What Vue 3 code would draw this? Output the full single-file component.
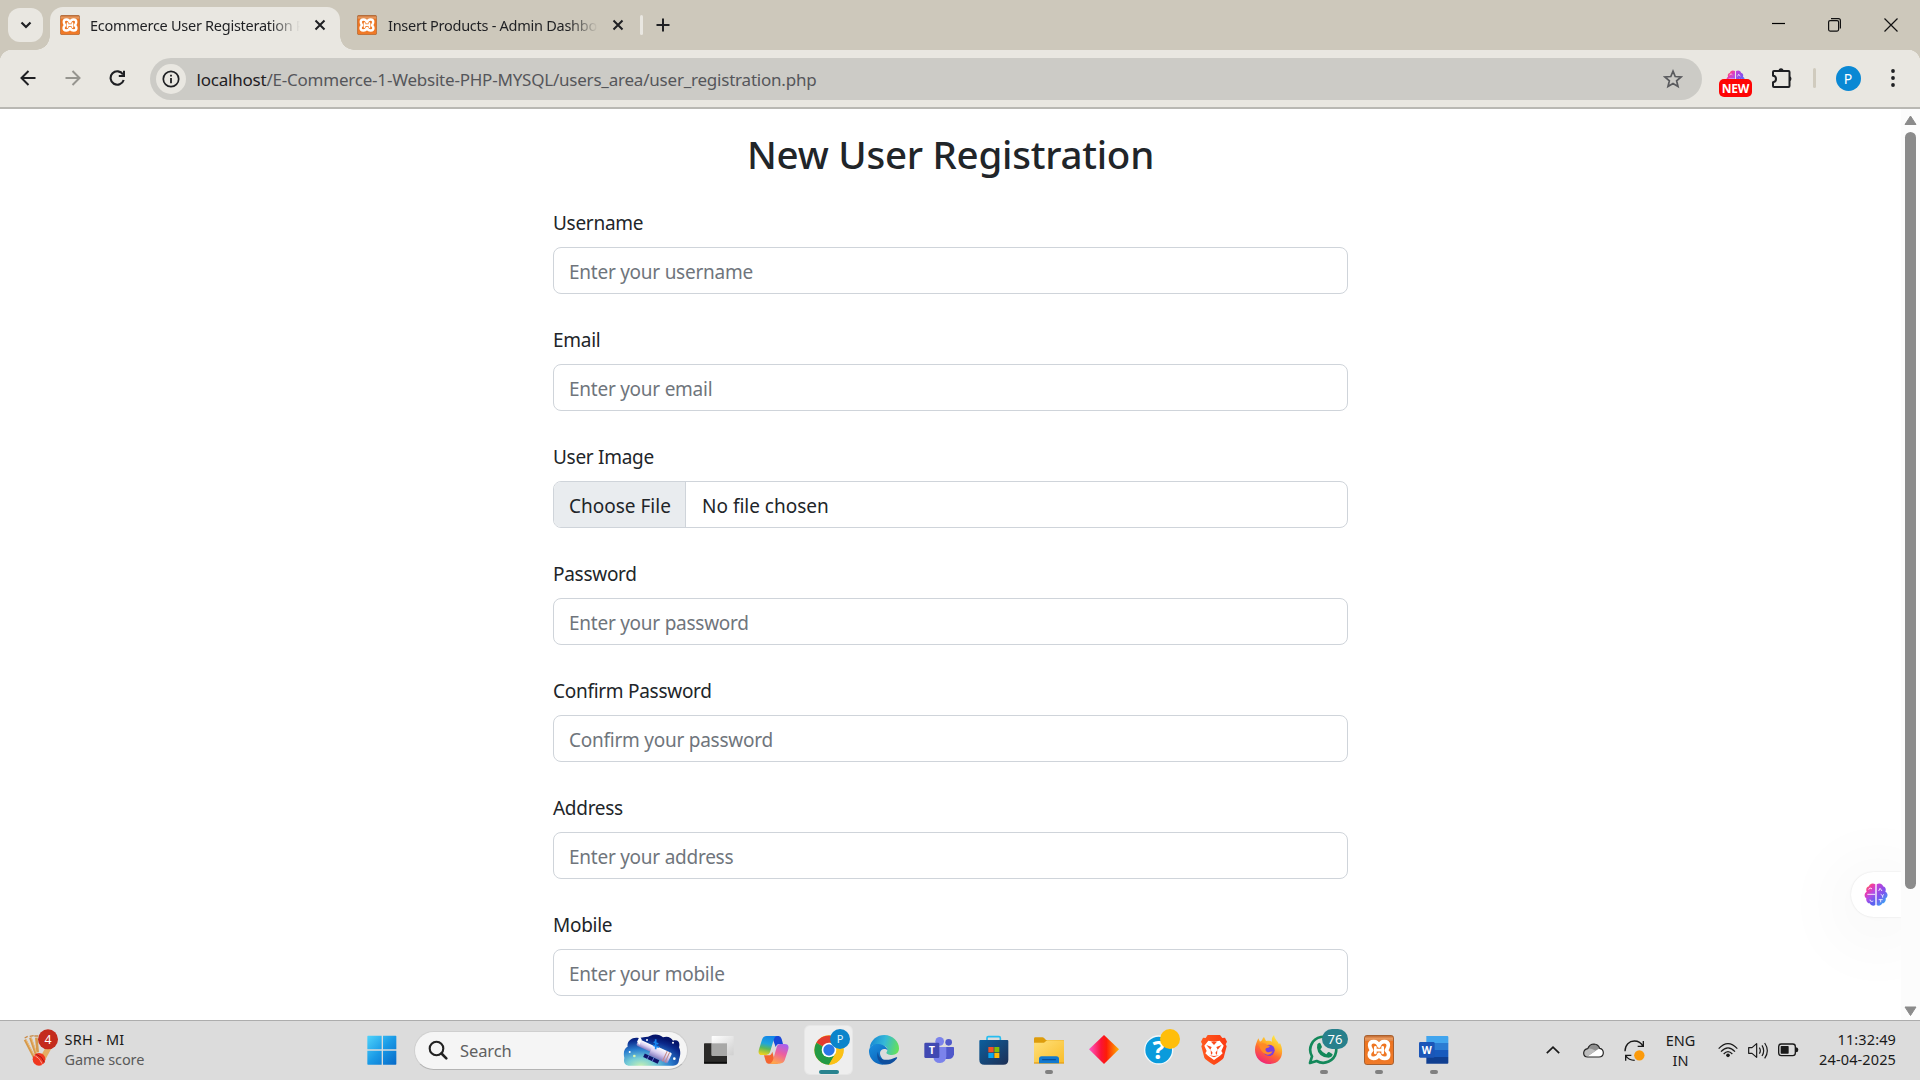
<script setup>
const fields = [
  { label: 'Username', hint: 'Enter your username' },
  { label: 'Email', hint: 'Enter your email' },
  { label: 'User Image', file: true },
  { label: 'Password', hint: 'Enter your password' },
  { label: 'Confirm Password', hint: 'Confirm your password' },
  { label: 'Address', hint: 'Enter your address' },
  { label: 'Mobile', hint: 'Enter your mobile' },
]
</script>

<template>
  <div class="screen">
    <!-- shared artwork -->
    <svg class="defs" width="0" height="0" aria-hidden="true">
      <defs>
        <linearGradient id="xg" x1="0" y1="0" x2="0" y2="1">
          <stop offset="0" stop-color="#b9622a" /><stop offset=".1" stop-color="#e9985c" /><stop offset=".17" stop-color="#e08a4c" />
          <stop offset=".2" stop-color="#ee7420" /><stop offset="1" stop-color="#f07a28" />
        </linearGradient>
        <linearGradient id="bg1" x1="0" y1="0" x2=".5" y2="1">
          <stop offset="0" stop-color="#f7a521" /><stop offset=".35" stop-color="#f03aa5" /><stop offset=".65" stop-color="#b64be6" /><stop offset="1" stop-color="#5b62f0" />
        </linearGradient>
        <linearGradient id="bg2" x1=".2" y1="0" x2=".7" y2="1">
          <stop offset="0" stop-color="#c33fd8" /><stop offset=".5" stop-color="#7a55ef" /><stop offset="1" stop-color="#2fb4f5" />
        </linearGradient>
      </defs>
      <symbol id="xampp" viewBox="0 0 90 90">
        <rect x="1.5" y="1.5" width="87" height="87" rx="7" fill="url(#xg)" stroke="#a8602f" stroke-width="3" />
        <path d="M45 33C42 23 36 20 29 20C20 20 17 25 17 31C17 37 20 41 23 46C18 50 16 54 16 59C16 66 22 70 28 70C36 70 42 67 45 58C48 67 54 70 62 70C69 70 74 66 74 59C74 54 72 50 67 46C70 41 73 37 73 31C73 25 70 20 61 20C54 20 48 23 45 33Z" fill="none" stroke="#fff" stroke-width="11" stroke-linejoin="round" />
        <path d="M34 37V54M56 37V54M34 45.500H56" stroke="#fff" stroke-width="8" stroke-linecap="round" />
      </symbol>
      <symbol id="brain" viewBox="0 0 72 72">
        <path d="M34 4C25-2 15 4 15 10C7 12 5 20 8 26C0 30 0 42 7 46C5 54 11 61 17 61C20 69 30 70 34 66Z" fill="url(#bg1)" />
        <path d="M38 4C47-2 57 4 57 10C65 12 67 20 64 26C73 30 72 42 65 46C67 54 61 61 55 61C52 69 42 70 38 66Z" fill="url(#bg2)" />
        <path d="M10 34H33M14 20C16 14 20 14 24 18M18 50C18 56 24 56 28 54M44 24L48 16L54 24M50 34L56 38L60 34M56 38V44M44 50H56M50 50V58" fill="none" stroke="#fff" stroke-opacity=".85" stroke-width="3" />
      </symbol>
    </svg>

    <header class="tabs">
      <button class="tab-search" aria-label="Search tabs">
        <svg width="12" height="8" viewBox="0 0 12 8"><path d="M1.500 1.500L6 6L10.500 1.500" fill="none" stroke="#1f2023" stroke-width="2.200" /></svg>
      </button>
      <div class="tab active">
        <svg class="fav" width="20" height="20"><use href="#xampp" /></svg>
        <span class="title t1">Ecommerce User Registeration P</span>
        <svg class="x" width="12" height="12" viewBox="0 0 12 12"><path d="M1.500 1.500L10.500 10.500M10.500 1.500L1.500 10.500" stroke="#1f2023" stroke-width="2" /></svg>
      </div>
      <div class="tab">
        <svg class="fav" width="20" height="20"><use href="#xampp" /></svg>
        <span class="title t2">Insert Products - Admin Dashbo</span>
        <svg class="x" width="12" height="12" viewBox="0 0 12 12"><path d="M1.500 1.500L10.500 10.500M10.500 1.500L1.500 10.500" stroke="#1f2023" stroke-width="2" /></svg>
      </div>
      <i class="tab-line"></i>
      <svg class="plus" width="14" height="14" viewBox="0 0 14 14"><path d="M7 .5V13.500M.5 7H13.500" stroke="#1f2023" stroke-width="2" /></svg>
      <div class="win">
        <svg width="13" height="14" viewBox="0 0 13 14"><path d="M0 5.500H13" stroke="#000" stroke-width="1.200" /></svg>
        <svg width="13" height="14" viewBox="0 0 13 14"><rect x=".6" y="2.600" width="10" height="10.500" rx="1.500" fill="none" stroke="#111" stroke-width="1.200" /><path d="M3 .7H10.500Q12.400.7 12.400 2.700V10.500" fill="none" stroke="#111" stroke-width="1.200" /></svg>
        <svg width="14" height="14" viewBox="0 0 14 14"><path d="M.5.5L13.500 13.500M13.500.5L.5 13.500" stroke="#111" stroke-width="1.200" /></svg>
      </div>
    </header>

    <div class="toolbar">
      <svg class="nav" width="16" height="16" viewBox="0 0 16 16"><path d="M8.500 1L1.500 8L8.500 15M1.500 8H15.500" fill="none" stroke="#1f2023" stroke-width="2" /></svg>
      <svg class="nav" width="16" height="16" viewBox="0 0 16 16"><path d="M7.500 1L14.500 8L7.500 15M14.500 8H.5" fill="none" stroke="#96958f" stroke-width="2" /></svg>
      <svg class="nav" width="17" height="17" viewBox="0 0 17 17"><path d="M14.700 10A6.700 6.700 0 1 1 14 4.500" fill="none" stroke="#1f2023" stroke-width="2.100" /><path d="M16 .8V7H9.800V5H14V.8Z" fill="#1f2023" /></svg>
      <div class="omni">
        <span class="info">
          <svg width="18" height="18" viewBox="0 0 18 18"><circle cx="9" cy="9" r="7.700" fill="none" stroke="#1f2023" stroke-width="1.700" /><path d="M9 8V13.200M9 4.700V6.500" stroke="#1f2023" stroke-width="1.800" /></svg>
        </span>
        <span class="url"><b>localhost</b>/E-Commerce-1-Website-PHP-MYSQL/users_area/user_registration.php</span>
        <svg class="star" width="20" height="20" viewBox="0 0 20 20"><path d="M10 2.200L12.200 7.500L18 8L13.600 11.800L15 17.400L10 14.400L5 17.400L6.400 11.800L2 8L7.800 7.500Z" fill="none" stroke="#5a5b5e" stroke-width="1.700" /></svg>
      </div>
      <div class="ext">
        <svg width="19" height="19"><use href="#brain" /></svg>
        <span>NEW</span>
      </div>
      <svg class="puzzle" width="22" height="22" viewBox="0 0 22 22"><path d="M2 5Q2 4 3 4H17.500Q18.500 4 18.500 5V19Q18.500 20 17.500 20H3Q2 20 2 19V15.200Q5 15 5 12T2 8.800Z" fill="none" stroke="#1f2023" stroke-width="2" stroke-linejoin="round" /><path d="M7.500 4A2.500 2.800 0 0 1 12.500 4ZM18.500 9.200A2.500 2.600 0 0 1 18.500 14.300Z" fill="#1f2023" /></svg>
      <i class="bar"></i>
      <span class="avatar">P</span>
      <svg class="dots" width="4" height="18" viewBox="0 0 4 18"><g fill="#1f2023"><circle cx="2" cy="2" r="1.900" /><circle cx="2" cy="9" r="1.900" /><circle cx="2" cy="16" r="1.900" /></g></svg>
    </div>

    <div class="viewport">
      <main class="page">
        <h2>New User Registration</h2>
        <form>
          <div v-for="f in fields" :key="f.label" class="field">
            <label>{{ f.label }}</label>
            <div v-if="f.file" class="control file">
              <span class="choose">Choose File</span><span class="none">No file chosen</span>
            </div>
            <div v-else class="control hint">{{ f.hint }}</div>
          </div>
        </form>
        <div class="assistant"><svg width="24" height="24"><use href="#brain" /></svg></div>
      </main>
      <div class="scroll">
        <svg width="13" height="11" viewBox="0 0 13 11"><path d="M6.500 1L12 9.500H1Z" fill="#8b8b8b" stroke="#8b8b8b" stroke-linejoin="round" /></svg>
        <i class="thumb"></i>
        <svg class="down" width="13" height="11" viewBox="0 0 13 11"><path d="M6.500 9.500L12 1H1Z" fill="#8b8b8b" stroke="#8b8b8b" stroke-linejoin="round" /></svg>
      </div>
    </div>

    <footer class="taskbar">
      <div class="widget">
        <svg width="36" height="38" viewBox="0 0 108 114">
          <path d="M6 32L34 86M22 26L42 84M40 26L44 70" stroke="#d69a4c" stroke-width="8" />
          <path d="M9 32L37 86M25 26L45 84" stroke="#f0c283" stroke-width="2.500" />
          <path d="M5 27L14 22M20 22L32 20M34 21L46 21" stroke="#c98a45" stroke-width="4" />
          <path d="M78 54L54 98" stroke="#e6ad62" stroke-width="17" />
          <circle cx="48" cy="91" r="19" fill="#f0371f" />
          <path d="M34 80Q50 86 58 107" fill="none" stroke="#fff" stroke-width="2.500" stroke-dasharray="3 2" /><path d="M40 76Q58 82 64 100" fill="none" stroke="#9d1414" stroke-width="3" />
          <circle cx="75" cy="31" r="30" fill="#c42b1c" />
          <text x="75" y="44" text-anchor="middle" font-size="37" fill="#fff" font-family="Noto Sans, sans-serif">4</text>
        </svg>
        <div class="lines"><span class="srh">SRH - MI</span><span class="game">Game score</span></div>
      </div>

      <div class="start">
        <svg width="30" height="30" viewBox="0 0 90 90">
          <defs><linearGradient id="wg" x1="0" y1="0" x2="1" y2="1"><stop offset="0" stop-color="#4fd3fb" /><stop offset=".5" stop-color="#1a9ae6" /><stop offset="1" stop-color="#0669c8" /></linearGradient></defs>
          <path d="M3 2H44V43H1V4Q1 2 3 2ZM48 2H86Q88 2 88 4V43H48ZM1 47H44V89H3Q1 89 1 87ZM48 47H88V87Q88 89 86 89H48Z" fill="url(#wg)" />
        </svg>
      </div>
      <div class="search">
        <svg class="mag" width="20" height="20" viewBox="0 0 20 20"><circle cx="8.500" cy="8.500" r="6.800" fill="none" stroke="#222" stroke-width="2.100" /><path d="M13.500 13.500L18.300 18.300" stroke="#222" stroke-width="2.600" stroke-linecap="round" /></svg>
        <span>Search</span>
        <svg class="scope" width="58" height="33" viewBox="0 0 174 99">
          <defs><radialGradient id="sky" cx=".3" cy="1" r=".95"><stop offset="0" stop-color="#c4efb4" /><stop offset=".25" stop-color="#79cfd6" /><stop offset=".55" stop-color="#2a7fd0" /><stop offset=".85" stop-color="#0b2a8c" /><stop offset="1" stop-color="#04146b" /></radialGradient>
            <linearGradient id="tube" x1="0" y1="0" x2="0" y2="1"><stop offset="0" stop-color="#fff" /><stop offset=".5" stop-color="#d8cdf0" /><stop offset="1" stop-color="#837bc0" /></linearGradient></defs>
          <path d="M14 38C10 22 28 8 46 12C62 8 74 10 82 5C96-2 112 2 120 10C134 4 146 12 150 20C166 16 172 26 168 40C174 52 172 66 168 76C168 90 160 95 150 95H24C8 97 0 88 4 72C0 56 4 42 14 38Z" fill="url(#sky)" />
          <g transform="rotate(25 85 52)"><rect x="36" y="34" width="62" height="21" rx="5" fill="url(#tube)" /><rect x="82" y="31" width="62" height="34" rx="4" fill="url(#tube)" /><path d="M128 31V65M136 31V65" stroke="#c38c8a" stroke-width="3" /><path d="M34 25L44 32V50L34 42Z" fill="#fff" /><path d="M70 66H118V78H70Z" fill="#10156d" /><path d="M84 66V78M100 66V78" stroke="#7d8ff0" stroke-width="2" /></g>
          <path d="M98 16V46M90 34L108 40M92 24L106 30" stroke="#1683ee" stroke-width="5" /><g fill="#fff"><circle cx="72" cy="18" r="3" /><circle cx="150" cy="26" r="3" /><circle cx="20" cy="54" r="3" /><circle cx="34" cy="66" r="4" fill="#d8f5b0" /><circle cx="154" cy="74" r="4" /></g>
        </svg>
      </div>

      <div class="app"><svg width="30" height="30" viewBox="0 0 90 90">
        <defs><linearGradient id="tv" x1="0" y1="0" x2="1" y2="1"><stop offset="0" stop-color="#fff" /><stop offset="1" stop-color="#cfcfcf" /></linearGradient></defs>
        <rect x="0" y="25" width="69" height="61" rx="2" fill="#2b2a29" /><path d="M0 83H69" stroke="#0d0d0d" stroke-width="5" /><rect x="23" y="3" width="66" height="58" rx="2" fill="url(#tv)" /><rect x="23" y="25" width="46" height="38" fill="#a8a8a7" />
      </svg></div>
      <div class="app"><svg width="31" height="30" viewBox="0 0 93 90">
        <defs>
          <linearGradient id="c1" x1=".5" y1="0" x2=".3" y2="1"><stop offset="0" stop-color="#1286e8" /><stop offset=".4" stop-color="#1fa5dc" /><stop offset=".65" stop-color="#5cb85a" /><stop offset="1" stop-color="#f2d21c" /></linearGradient>
          <linearGradient id="c2" x1=".7" y1="0" x2=".3" y2="1"><stop offset="0" stop-color="#a762ee" /><stop offset=".45" stop-color="#ec5fa0" /><stop offset="1" stop-color="#ffa94a" /></linearGradient>
        </defs>
        <path d="M30 3H62Q68 3 71 12L75 27H62Q56 27 53 36L43 8Z" fill="#1847d8" />
        <path d="M61 86H31Q25 86 23 78L18 61H32Q40 61 43 50L50 78Z" fill="#f4652f" />
        <path d="M26 3H56Q50 4 47 14L36 52Q33 60 25 60H12Q-2 60 3 43L12 14Q15 3 26 3Z" fill="url(#c1)" />
        <path d="M64 86H36Q42 84 45 75L56 37Q59 27 67 27H80Q96 27 90 46L80 76Q76 86 64 86Z" fill="url(#c2)" />
      </svg></div>
      <div class="app on">
        <svg width="30" height="30" viewBox="0 0 90 90">
          <circle cx="45" cy="45" r="44" fill="#fbc116" />
          <path d="M45 45L7 23A44 44 0 0 1 83 23Z" fill="#e33b2e" />
          <path d="M45 45L7 23A44 44 0 0 0 45 89L65 55Z" fill="#239a45" />
          <path d="M45 23H83A44 44 0 0 1 45 89L64 56Z" fill="#fbc116" />
          <circle cx="45" cy="45" r="22" fill="#fff" /><circle cx="45" cy="45" r="17" fill="#2a76e8" />
        </svg>
        <span class="mini">P</span>
      </div>
      <div class="app"><svg width="30" height="30" viewBox="0 0 90 90">
        <defs>
          <linearGradient id="e1" x1="0" y1=".3" x2="1" y2=".5"><stop offset="0" stop-color="#1687d4" /><stop offset=".5" stop-color="#35b8d8" /><stop offset="1" stop-color="#64e05c" /></linearGradient>
          <linearGradient id="e2" x1="0" y1="0" x2=".6" y2="1"><stop offset="0" stop-color="#1a90e0" /><stop offset="1" stop-color="#0b62b8" /></linearGradient>
        </defs>
        <path d="M2 38C6 14 24 0 46 0C72 0 90 20 90 40C90 54 80 60 69 60C58 60 50 56 53 51C58 44 54 34 44 32C24 26 8 30 2 38Z" fill="url(#e1)" />
        <path d="M0 46C2 32 16 25 30 27C42 28 54 36 56 46C48 38 34 42 33 54C33 68 46 80 60 84C30 100-2 76 0 46Z" fill="url(#e2)" />
        <path d="M27 50C27 74 50 82 82 67C88 65 82 74 77 78C60 94 38 90 30 78C24 70 23 58 27 50Z" fill="#0f4f9e" />
      </svg></div>
      <div class="app"><svg width="30" height="30" viewBox="0 0 90 90">
        <circle cx="74" cy="22" r="10" fill="#5059c9" /><path d="M64 36H88Q90 36 90 38V58Q88 72 74 72H62Z" fill="#4f58ca" />
        <circle cx="47" cy="19" r="13" fill="#7b83eb" /><path d="M30 36H67V64Q66 84 48 84T28 66Z" fill="#7b83eb" />
        <rect x="1" y="23" width="45" height="46" rx="4" fill="#4149b2" /><text x="23.500" y="57" text-anchor="middle" font-size="32" font-weight="700" fill="#fff" font-family="Noto Sans, sans-serif">T</text>
      </svg></div>
      <div class="app"><svg width="30" height="30" viewBox="0 0 90 90">
        <defs><linearGradient id="st" x1="0" y1="0" x2="1" y2="1"><stop offset="0" stop-color="#0c5f9e" /><stop offset="1" stop-color="#1d2f55" /></linearGradient></defs>
        <path d="M24 20V9Q24 5 28 5H60Q64 5 64 9V20" fill="none" stroke="#27bdf0" stroke-width="5" />
        <path d="M1 18Q1 15 4 15H85Q88 15 88 18V74Q88 89 73 89H16Q1 89 1 74Z" fill="url(#st)" />
        <path d="M28 36H44V52H28Z" fill="#f35325" /><path d="M46 36H61V52H46Z" fill="#81bc06" /><path d="M28 54H44V69H28Z" fill="#05a6f0" /><path d="M46 54H61V69H46Z" fill="#ffba08" />
      </svg></div>
      <div class="app run"><svg width="30" height="30" viewBox="0 0 90 90">
        <defs><linearGradient id="fo" x1="0" y1="0" x2="1" y2="1"><stop offset="0" stop-color="#ffe07a" /><stop offset="1" stop-color="#f9bd2a" /></linearGradient></defs>
        <path d="M0 11Q0 7 4 7H25Q28 7 31 10L36 15H86Q90 15 90 19V40H0Z" fill="#dd9c0c" /><path d="M0 23H30L39 16H86Q90 16 90 19V84H0Z" fill="url(#fo)" /><path d="M0 82H90V86H0Z" fill="#e5a11a" />
        <path d="M15 85V72Q15 64 23 64H67Q75 64 75 72V85Z" fill="#1279cf" /><path d="M26 74H64" stroke="#0a4f98" stroke-width="4" stroke-linecap="round" />
      </svg></div>
      <div class="app"><svg width="30" height="30" viewBox="0 0 90 90">
        <defs><linearGradient id="di"><stop offset="0" stop-color="#ff58c8" /><stop offset=".4" stop-color="#fb1338" /><stop offset=".58" stop-color="#fd1c08" /><stop offset="1" stop-color="#ffb400" /></linearGradient></defs>
        <path d="M45 0L90 43L45 87L0 43Z" fill="url(#di)" />
      </svg></div>
      <div class="app">
        <svg class="help" width="30" height="30" viewBox="0 0 90 90"><circle cx="44" cy="45" r="42" fill="#0a9bdc" stroke="#f4f8fa" stroke-width="4" /><text x="44" y="73" text-anchor="middle" font-size="76" font-weight="700" fill="#fff" font-family="Noto Sans, sans-serif">?</text></svg>
        <span class="mini amber"></span>
      </div>
      <div class="app"><svg width="30" height="30" viewBox="0 0 90 90">
        <defs><linearGradient id="br"><stop offset="0" stop-color="#ff5a1f" /><stop offset="1" stop-color="#fb3a12" /></linearGradient></defs>
        <path d="M26 0H63L70 9L78 8L84 20L80 28L83 34L74 68Q72 74 45 90Q18 74 16 68L7 34L10 28L6 20L12 8L20 9Z" fill="url(#br)" />
        <path d="M28 17L45 20L62 17L74 32L67 48L71 55L63 62L45 75L27 62L19 55L23 48L16 32Z" fill="#fff" />
        <path d="M22 30L38 36L34 44ZM68 30L52 36L56 44ZM35 45L41 54L36 60ZM55 45L49 54L54 60ZM36 20L45 30L54 20ZM30 61L45 67L60 61L45 63Z" fill="#fb4a1c" />
      </svg></div>
      <div class="app"><svg width="30" height="30" viewBox="0 0 90 90">
        <defs><linearGradient id="ff" x1=".8" y1="0" x2=".3" y2="1"><stop offset="0" stop-color="#fff04a" /><stop offset=".35" stop-color="#ffb52a" /><stop offset=".6" stop-color="#ff6a30" /><stop offset="1" stop-color="#f0207c" /></linearGradient></defs>
        <path d="M3 44C3 34 8 20 13 10L18 20L24 16C26 10 28 7 30 6L36 18C44 16 50 18 54 20C52 10 56 4 60 0C62 14 72 18 75 28L78 24C90 46 88 86 45 87C20 86 3 68 3 44Z" fill="url(#ff)" />
        <circle cx="45" cy="46" r="17" fill="#7b3fe0" /><path d="M15 30C24 22 34 24 40 31L48 33Q46 39 36 40Q32 46 38 50Q46 54 56 48Q50 62 36 58Q20 52 15 30Z" fill="#ff8a26" />
      </svg></div>
      <div class="app run">
        <svg width="31" height="30" viewBox="0 0 93 90"><path d="M6 84L12 64A39 39 0 1 1 26 78Z" fill="none" stroke="#13885a" stroke-width="8" stroke-linejoin="round" /><path d="M28 28Q34 20 38 26L42 36Q40 40 37 43Q44 54 55 58L60 52Q63 50 67 53L74 58Q72 68 62 68Q30 66 27 38Z" fill="#13885a" /></svg>
        <span class="count">76</span>
      </div>
      <div class="app run"><svg width="30" height="30"><use href="#xampp" /></svg></div>
      <div class="app run"><svg width="30" height="30" viewBox="0 0 90 90">
        <path d="M22 3H85Q88 3 88 6V25H22Z" fill="#41a5ee" /><path d="M22 24H88V45H22Z" fill="#2b7cd3" /><path d="M22 45H88V66H22Z" fill="#185abd" /><path d="M22 66H88V83Q88 86 85 86H22Z" fill="#103f91" />
        <rect x="0" y="21" width="47" height="47" rx="4" fill="#1b56b8" /><text x="23" y="56" text-anchor="middle" font-size="31" font-weight="700" fill="#fff" font-family="Noto Sans, sans-serif">W</text>
      </svg></div>

      <div class="tray">
        <svg class="chev" width="14" height="8" viewBox="0 0 14 8"><path d="M.8 7.200L7 1.200L13.200 7.200" fill="none" stroke="#1a1a1a" stroke-width="1.700" /></svg>
        <svg class="cloud" width="21" height="15" viewBox="0 0 63 45"><path d="M14 42Q2 42 2 30Q3 19 14 17Q20 3 33 3Q46 4 50 16Q61 18 61 30Q60 42 48 42Z" fill="#fff" /><path d="M2 30Q3 19 14 17Q20 3 33 3Q46 4 50 16L38 23L14 40Q2 40 2 30Z" fill="#8f8f8f" /><path d="M14 17Q22 14 38 23L14 40Q2 40 2 30Q3 19 14 17Z" fill="#bdbdbd" /><path d="M14 42Q2 42 2 30Q3 19 14 17Q20 3 33 3Q46 4 50 16Q61 18 61 30Q60 42 48 42Z" fill="none" stroke="#222" stroke-width="3.500" /></svg>
        <svg class="sync" width="21" height="21" viewBox="0 0 63 63"><path d="M3 34C3 14 16 3 31 3C43 3 52 9 57 19M58 3V19H41M5 62V46H22M6 48Q14 61 32 61" fill="none" stroke="#1a1a1a" stroke-width="4" /><circle cx="46" cy="46" r="15.500" fill="#fb9a0b" /></svg>
        <div class="lines lang"><span>ENG</span><span>IN</span></div>
        <svg class="wifi" width="20" height="16" viewBox="0 0 60 48"><g fill="none" stroke="#1a1a1a" stroke-width="3.600"><path d="M2 20Q30-10 58 20M9 29Q30 6 51 29M17 36Q30 22 43 36" /></g><circle cx="30" cy="40" r="5.500" fill="#1a1a1a" /></svg>
        <svg class="vol" width="21" height="17" viewBox="0 0 63 51"><path d="M2 17H12L26 5V46L12 34H2ZM34 17Q40 26 34 35M42 10Q52 26 42 42M50 3Q66 26 50 49" fill="none" stroke="#1a1a1a" stroke-width="3.600" stroke-linejoin="round" /></svg>
        <svg class="batt" width="21" height="14" viewBox="0 0 63 42"><rect x="2" y="3" width="50" height="35" rx="8" fill="none" stroke="#1a1a1a" stroke-width="4" /><rect x="8" y="9" width="24" height="23" rx="2" fill="#1a1a1a" /><path d="M54 13Q61 13 61 20.500T54 28Z" fill="#1a1a1a" /></svg>
        <div class="lines clock"><span>11:32:49</span><span>24-04-2025</span></div>
      </div>
    </footer>
  </div>
</template>

<style>
body { margin: 0; overflow: hidden; }
</style>

<style scoped>
* { box-sizing: border-box; }
.screen { width: 1920px; height: 1080px; display: flex; flex-direction: column; overflow: hidden; background: #fff; font-family: "Noto Sans", "Open Sans", sans-serif; color: #212529; }
.defs { position: absolute; }
svg { display: block; flex: none; }
i { flex: none; }

.tabs { height: 50px; flex: none; display: flex; background: #cdc8bb; padding-left: 8px; }
.tab-search { width: 35px; height: 34px; margin: 8px 7px 0 0; border: 0; padding: 0; border-radius: 12px; background: #e9e7e1; display: flex; align-items: center; justify-content: center; flex: none; }
.tab { width: 297px; height: 50px; padding: 7px 0 7px 17px; display: flex; align-items: center; flex: none; }
.tab.active { position: relative; width: 290px; height: 43px; margin-top: 7px; padding: 0 0 7px 10px; border-radius: 13px 13px 0 0; background: #e9e7e1; }
.tab.active::before, .tab.active::after { content: ""; position: absolute; bottom: 0; width: 14px; height: 14px; }
.tab.active::before { left: -14px; background: radial-gradient(circle at 0 0, transparent 13.500px, #e9e7e1 14px); }
.tab.active::after { right: -14px; background: radial-gradient(circle at 100% 0, transparent 13.500px, #e9e7e1 14px); }
.title { width: 212px; margin-left: 10px; font-size: 14.500px; line-height: 20px; white-space: nowrap; color: #1f2023; -webkit-mask-image: linear-gradient(90deg, #000 180px, transparent 210px); mask-image: linear-gradient(90deg, #000 180px, transparent 210px); }
.t1 { letter-spacing: -.27px; }
.t2 { margin-left: 11px; width: 211px; letter-spacing: -.27px; }
.x { margin-left: 12px; }
.tab:not(.active) .x { margin-left: 13px; }
.tab-line { width: 3px; height: 20px; margin: 15px 0 0 3px; background: #e9e7e1; border-radius: 2px; }
.plus { margin: 18px 0 0 12.500px; }
.win { margin-left: auto; padding: 18px 22px 0 0; display: flex; gap: 43px; }

.toolbar { height: 59px; flex: none; display: flex; align-items: center; padding: 0 0 1px 20px; border-bottom: 2px solid #b9b8b3; background: radial-gradient(circle at 12px 12px, #e9e7e1 12px, #cdc8bb 12.500px) 0 0 / 12px 12px no-repeat, radial-gradient(circle at 0 12px, #e9e7e1 12px, #cdc8bb 12.500px) 100% 0 / 12px 12px no-repeat, #e9e7e1; }
.nav { margin-right: 29px; }
.nav + .nav { margin-right: 28px; }
.nav + .nav + .nav { margin-right: 24px; }
.omni { width: 1552px; height: 42px; margin-top: 2px; border-radius: 21px; background: #cccbc6; display: flex; align-items: center; flex: none; }
.info { width: 30px; height: 30px; margin-left: 6px; border-radius: 50%; background: #e9e7e1; display: flex; align-items: center; justify-content: center; }
.url { margin: 1px 0 0 10.500px; font-size: 17px; letter-spacing: -.215px; line-height: 24px; color: #55565a; white-space: nowrap; }
.url b { font-weight: 400; color: #1f2023; }
.star { margin: 0 19px 0 auto; }
.ext { width: 33px; height: 28px; margin: 0 0 0 17px; display: flex; flex-direction: column; align-items: center; position: relative; top: 6px; }
.ext span { width: 33px; height: 18px; margin-top: -10px; border-radius: 5px; background: #fe0505; color: #fff; font: 700 12px/19px "Noto Sans", sans-serif; letter-spacing: -.2px; text-align: center; position: relative; }
.puzzle { margin: 0 0 0 19px; }
.bar { width: 3px; height: 20px; margin-left: 19.500px; background: #d0cbbe; border-radius: 2px; }
.avatar { width: 25px; height: 25px; margin-left: 20px; border-radius: 50%; background: #0a88d4; color: #fff; font-size: 14px; line-height: 25px; text-align: center; }
.dots { margin-left: 30px; }

.viewport { height: 911px; flex: none; display: flex; overflow: hidden; }
.page { width: 1901px; position: relative; overflow: hidden; display: flex; flex-direction: column; align-items: center; }
h2 { margin: 19px 0 0; font-size: 38.500px; line-height: 52px; font-weight: 500; letter-spacing: -.25px; white-space: nowrap; }
form { width: 795px; margin-top: 28px; }
.field { height: 117px; display: flex; flex-direction: column; }
label { height: 39px; font-size: 19px; line-height: 30px; letter-spacing: -.28px; }
.control { height: 47px; border: 1px solid #cfd4da; border-radius: 8px; display: flex; overflow: hidden; font-size: 19px; line-height: 48px; white-space: nowrap; }
.hint { padding-left: 15px; color: #6f757c; letter-spacing: -.25px; }
.choose { width: 132px; padding-left: 15px; background: #e9ecef; border-right: 1px solid #cfd4da; flex: none; }
.none { padding-left: 16px; }
.assistant { position: absolute; right: 0; top: 763px; width: 50px; height: 45px; padding: 11px 0 0 13px; border-radius: 23px 0 0 23px; background: #fff; box-shadow: 0 10px 80px rgba(0, 0, 0, .11), 0 0 2px rgba(0, 0, 0, .12); }
.scroll { width: 19px; background: #fcfcfc; display: flex; flex-direction: column; align-items: center; padding: 6px 0 3px 0; }
.thumb { width: 11px; height: 757px; margin-top: 6px; border-radius: 6px; background: #8b8b8b; }
.down { margin-top: auto; }

.taskbar { height: 60px; flex: none; display: flex; align-items: center; padding-bottom: 1px; background: #dcdcdc; border-top: 1px solid #adadad; font-size: 14.500px; }
.lines { display: flex; flex-direction: column; line-height: 20px; color: #1a1a1a; white-space: nowrap; }
.widget { width: 354px; display: flex; align-items: center; padding-left: 23px; flex: none; }
.widget svg { margin-top: -4px; }
.widget .lines { margin: -3px 0 0 5.500px; }
.srh { letter-spacing: .25px; }
.game { color: #5a5a5a; letter-spacing: -.1px; }
.start { width: 60px; padding-left: 13px; flex: none; }
.search { width: 274px; height: 39px; margin-right: 7px; border-radius: 20px; background: #f5f5f5; border: 1px solid #cfcfcf; border-bottom-color: #b4b4b4; display: flex; align-items: center; flex: none; }
.mag { margin-left: 13px; }
.search span { margin-left: 12px; font-size: 16.500px; letter-spacing: -.1px; color: #606060; }
.scope { margin: 0 6px 0 auto; }
.app { width: 47px; height: 48px; margin-right: 8px; border-radius: 5px; display: flex; align-items: center; justify-content: center; position: relative; flex: none; }
.app.on { background: #eeeeee; box-shadow: 0 0 0 1px #e6e6e6; }
.app.on::after, .app.run::after { content: ""; position: absolute; bottom: 0; left: 14px; width: 20px; height: 4px; border-radius: 2px; background: #28838f; }
.app.run::after { left: 20px; width: 8px; background: #808080; }
.help { overflow: visible; }
.mini { position: absolute; left: 25px; top: 3px; width: 20px; height: 20px; border-radius: 50%; background: #0a84cb; color: #e3f2fb; font-size: 11px; line-height: 20px; text-align: center; }
.mini.amber { background: #ffbe0b; }
.count { position: absolute; left: 22px; top: 3px; width: 26px; height: 20px; border-radius: 10px; background: #28808c; color: #fff; font-size: 13px; line-height: 20px; text-align: center; }
.tray { margin-left: auto; padding-right: 24px; display: flex; align-items: center; }
.cloud { margin: 0 20px 0 22.500px; }
.lang { width: 34px; margin: -1px 20.500px 0 19px; align-items: center; }
.vol { margin: 0 9px 0 10px; }
.clock { width: 78px; margin: -3px 0 0 19px; align-items: flex-end; letter-spacing: .12px; }
</style>
